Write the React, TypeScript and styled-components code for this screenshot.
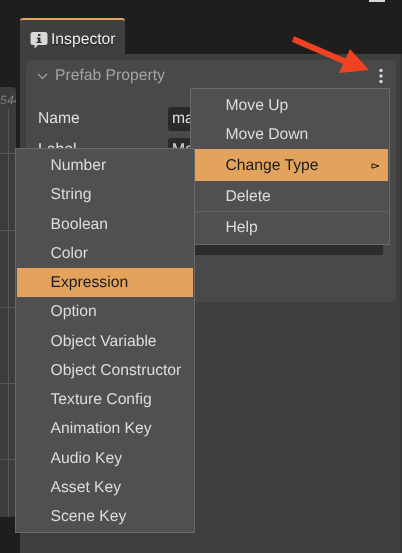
import React from 'react';
import styled, {createGlobalStyle} from 'styled-components';

const GlobalStyle = createGlobalStyle`
  html, body {
    margin: 0;
    padding: 0;
    background: #1e1e1e;
  }
`;

const Screen = styled.div`
  position: relative;
  display: flex;
  width: 402px;
  height: 553px;
  overflow: hidden;
  background: #1e1e1e;
  font-family: "Liberation Sans", Arial, sans-serif;
  text-rendering: geometricPrecision;
  filter: blur(0.4px);
`;

const TopNub = styled.div`
  position: absolute;
  top: 0;
  left: 369px;
  width: 16px;
  height: 2px;
  background: #d8d8d8;
`;

const SidePanel = styled.div`
  position: relative;
  flex: none;
  width: 16px;
  height: 430px;
  margin-top: 87px;
  overflow: hidden;
  border-radius: 0 4px 0 0;
  background: #3c3c3c;
  color: #808080;
  font-size: 12px;
  font-style: italic;
`;

const RulerText = styled.div`
  padding: 6px 0 0 0;
  letter-spacing: 0.5px;
  white-space: nowrap;
`;

const RulerV = styled.div`
  position: absolute;
  top: 21px;
  bottom: 0;
  left: 8px;
  width: 1px;
  background: #555;
`;

const RulerH = styled.div<{$top: number}>`
  position: absolute;
  top: ${p => p.$top}px;
  left: 0;
  right: 0;
  height: 1px;
  background: #585858;
`;

const InspectorColumn = styled.div`
  display: flex;
  flex-direction: column;
  flex: none;
  width: 382px;
  margin: 18px 0 0 4px;
`;

const Tab = styled.div`
  display: flex;
  align-items: center;
  gap: 3px;
  box-sizing: border-box;
  width: 105px;
  height: 36px;
  padding: 6px 0 0 10px;
  border-top: 2px solid #e3a35c;
  border-radius: 3px 3px 0 0;
  background: #3f3f3f;
  color: #f0f0f0;
  font-size: 15.7px;
  text-shadow: 0 1px 1px #111;
`;

const Pane = styled.div`
  flex: 1;
  padding: 6px 4px 0 6px;
  border-right: 2px solid #383838;
  background: #3f3f3f;
`;

const Card = styled.div`
  box-sizing: border-box;
  height: 242px;
  padding: 0 13px 0 12px;
  border-radius: 5px;
  background: #494949;
`;

const CardHeader = styled.div`
  display: flex;
  align-items: center;
  gap: 7px;
  height: 32px;
  margin-left: -1px;
  color: #a3a3a3;
  font-size: 15.7px;
`;

const FieldRow = styled.div`
  display: flex;
  align-items: center;
  height: 29px;
  margin-top: 12px;
  color: #e0e0e0;
  font-size: 15.7px;

  & + & {
    margin-top: 2px;
  }
`;

const FieldLabel = styled.div`
  width: 130px;
`;

const FieldInput = styled.div`
  flex: 1;
  box-sizing: border-box;
  height: 24px;
  padding-left: 4px;
  line-height: 24px;
  border-radius: 3px;
  background: #2a2a2a;
`;

const LongInput = styled.div`
  height: 24px;
  margin-top: 67px;
  margin-left: 130px;
  border-radius: 3px;
  background: #2c2c2c;
`;

const Menu = styled.div<{$left: number; $top: number; $width: number}>`
  position: absolute;
  left: ${p => p.$left}px;
  top: ${p => p.$top}px;
  box-sizing: border-box;
  width: ${p => p.$width}px;
  padding: 2px 1px 1px;
  border: 1px solid #6a6a6a;
  background: #505050;
  font-size: 15.7px;
`;

const MenuItem = styled.div<{$active?: boolean; $height: number}>`
  display: flex;
  align-items: center;
  justify-content: space-between;
  box-sizing: border-box;
  height: ${p => p.$height}px;
  padding: 1px 8px 0 33.500px;
  background: ${p => (p.$active ? '#e3a35c' : 'transparent')};
  color: ${p => (p.$active ? '#1c1c1c' : '#dcdcdc')};
`;

const MenuSeparator = styled.div`
  height: 1px;
  background: #606060;
`;

const MoreDots = styled.svg`
  position: absolute;
  left: 377px;
  top: 68px;
`;

const RedArrow = styled.svg`
  position: absolute;
  left: 288px;
  top: 32px;
`;

const TabIcon = () => (
  <svg width="18" height="19" viewBox="0 0 18 19">
    <path d="M3 1h12a2.500 2.500 0 0 1 2.500 2.500v8a2.500 2.500 0 0 1-2.500 2.500H8l-3.500 3.500V14H3a2.500 2.500 0 0 1-2.500-2.500v-8A2.500 2.500 0 0 1 3 1z" fill="#d8d8d8"/>
    <path d="M8 3h2.400v2H8zM6.800 6.500h3.600v4.200h1.200v1.300H6.600v-1.300h1.300V7.800H6.800z" fill="#333"/>
  </svg>
);

const firstMenu = ['Move Up', 'Move Down'];
const typeMenu = [
  'Number', 'String', 'Boolean', 'Color', 'Expression', 'Option', 'Object Variable',
  'Object Constructor', 'Texture Config', 'Animation Key', 'Audio Key', 'Asset Key', 'Scene Key',
];

export default function App() {
  return (
    <Screen>
      <GlobalStyle/>
      <TopNub/>
      <SidePanel>
        <RulerText>544</RulerText>
        <RulerV/>
        {[66, 143, 220, 296, 372].map(top => <RulerH key={top} $top={top}/>)}
      </SidePanel>
      <InspectorColumn>
        <Tab><TabIcon/>Inspector</Tab>
        <Pane>
          <Card>
            <CardHeader>
              <svg width="11" height="7" viewBox="0 0 11 7" fill="none" stroke="#a3a3a3" strokeWidth="1.200">
                <path d="M1 1l4.500 4.500L10 1"/>
              </svg>
              Prefab Property
            </CardHeader>
            <FieldRow><FieldLabel>Name</FieldLabel><FieldInput>ma</FieldInput></FieldRow>
            <FieldRow><FieldLabel>Label</FieldLabel><FieldInput>Ma</FieldInput></FieldRow>
            <LongInput/>
          </Card>
        </Pane>
      </InspectorColumn>

      <Menu $left={190} $top={88} $width={200}>
        {firstMenu.map(label => <MenuItem key={label} $height={29}>{label}</MenuItem>)}
        <MenuItem $active $height={32}>
          Change Type
          <svg width="9" height="6" viewBox="0 0 9 6" fill="none" stroke="#1c1c1c" strokeWidth="1">
            <path d="M1 .8L8 3 1 5.200z"/>
          </svg>
        </MenuItem>
        <MenuItem $height={30}>Delete</MenuItem>
        <MenuSeparator/>
        <MenuItem $height={31}>Help</MenuItem>
      </Menu>

      <Menu $left={15} $top={148} $width={180}>
        {typeMenu.map(label => (
          <MenuItem key={label} $active={label === 'Expression'} $height={29.250}>{label}</MenuItem>
        ))}
      </Menu>

      <MoreDots width="8" height="16" viewBox="0 0 8 16" fill="#d8d8d8">
        <circle cx="4" cy="2.500" r="1.700"/>
        <circle cx="4" cy="8" r="1.700"/>
        <circle cx="4" cy="13.500" r="1.700"/>
      </MoreDots>
      <RedArrow width="86" height="44" viewBox="0 0 86 44">
        <path d="M5 7L58 30" stroke="#ef4123" strokeWidth="6"/>
        <polygon points="62,17 81,38 51,41" fill="#ef4123"/>
      </RedArrow>
    </Screen>
  );
}
